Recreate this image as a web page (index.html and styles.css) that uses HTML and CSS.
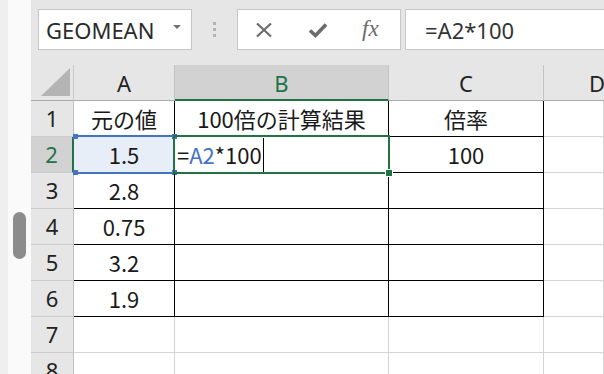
FILE: index.html
```html
<!DOCTYPE html>
<html lang="ja">
<head>
<meta charset="utf-8">
<title>GEOMEAN</title>
<link rel="stylesheet" href="styles.css">
</head>
<body>
<div class="app">
  <div class="side">
    <div class="side-edge"></div>
    <div class="side-track"><div class="thumb"></div></div>
  </div>
  <div class="main">
    <div class="fbar">
      <div class="namebox">
        <span class="name">GEOMEAN</span>
        <svg class="ddarrow" width="8" height="4" viewBox="0 0 8 4"><path d="M0 0H8L4 4Z" fill="#707070"/></svg>
      </div>
      <div class="grip"><i></i><i></i><i></i></div>
      <div class="btns">
        <svg class="ico" width="18" height="16" viewBox="0 0 18 16"><path d="M2 1.5L16 14.5M16 1.5L2 14.5" stroke="#6b6b6b" stroke-width="2.2" fill="none"/></svg>
        <svg class="ico" width="20" height="16" viewBox="0 0 20 16"><path d="M2 8.5L7.5 13.5L18 2.5" stroke="#6b6b6b" stroke-width="3.6" fill="none" stroke-linejoin="miter"/></svg>
        <span class="fx">fx</span>
      </div>
      <div class="finput">=A2*100</div>
    </div>
    <div class="sheet">
      <div class="hd corner"><svg width="30" height="29" viewBox="0 0 30 29"><path d="M29 0V28H0Z" fill="#b4b4b4"/></svg></div>
      <div class="hd col">A</div>
      <div class="hd col sel">B</div>
      <div class="hd col">C</div>
      <div class="hd col last">D</div>

      <div class="hd row">1</div>
      <div class="c t">元の値</div>
      <div class="c t">100倍の計算結果</div>
      <div class="c t">倍率</div>
      <div class="c"></div>

      <div class="hd row sel">2</div>
      <div class="c t ref">1.5<span class="refbox"><i class="h tl"></i><i class="h tr"></i><i class="h bl"></i><i class="h br"></i></span></div>
      <div class="c t edit"><span class="etext">=<span class="blue">A2</span>*100</span><span class="caret"></span><span class="actbox"><i class="fill"></i></span></div>
      <div class="c t">100</div>
      <div class="c"></div>

      <div class="hd row">3</div>
      <div class="c t">2.8</div>
      <div class="c t"></div>
      <div class="c t"></div>
      <div class="c"></div>

      <div class="hd row">4</div>
      <div class="c t">0.75</div>
      <div class="c t"></div>
      <div class="c t"></div>
      <div class="c"></div>

      <div class="hd row">5</div>
      <div class="c t">3.2</div>
      <div class="c t"></div>
      <div class="c t"></div>
      <div class="c"></div>

      <div class="hd row">6</div>
      <div class="c t">1.9</div>
      <div class="c t"></div>
      <div class="c t"></div>
      <div class="c"></div>

      <div class="hd row">7</div>
      <div class="c"></div>
      <div class="c"></div>
      <div class="c"></div>
      <div class="c"></div>

      <div class="hd row">8</div>
      <div class="c"></div>
      <div class="c"></div>
      <div class="c"></div>
      <div class="c"></div>
    </div>
  </div>
</div>
</body>
</html>
```

FILE: styles.css
```css
* { box-sizing: border-box; }
html, body { margin: 0; padding: 0; }
body {
  width: 604px;
  height: 374px;
  overflow: hidden;
  font-family: "Noto Sans CJK JP", "Noto Sans", sans-serif;
  color: #1a1a1a;
  background: #e6e6e6;
}
.app { display: flex; height: 374px; }
.side { display: flex; width: 31px; flex: none; }
.side-edge { width: 8px; background: #efefef; }
.side-track { width: 23px; background: #fafafa; padding: 212px 0 0 5px; }
.thumb { width: 13px; height: 47px; border-radius: 7px; background: #8c8c8c; }

.main { flex: 1; display: flex; flex-direction: column; min-width: 0; overflow: hidden; }

.fbar {
  height: 65px;
  flex: none;
  display: flex;
  align-items: flex-start;
  padding: 9px 0 0 7px;
}
.namebox {
  width: 154px; height: 41px;
  flex: none;
  background: #fff;
  border: 1px solid #c6c6c6;
  display: flex; align-items: center; justify-content: space-between;
  padding: 0 10px 0 7px;
}
.name { font-family: "Noto Sans", sans-serif; font-size: 22px; color: #2b2b2b; }
.ddarrow { margin-top: -5px; }
.grip { width: 45px; flex: none; display: flex; flex-direction: column; align-items: center; gap: 3px; padding-top: 13px; height: 41px; }
.grip i { display: block; width: 3px; height: 3px; background: #b4b4b4; }
.btns {
  width: 164px; height: 41px;
  flex: none;
  background: #fff;
  border: 1px solid #c6c6c6;
  display: flex; align-items: center;
  padding: 0 0 0 17px;
}
.btns .ico:first-child { margin-right: 35px; }
.btns .ico:nth-child(2) { margin-right: 34px; }
.fx {
  font-family: "Liberation Serif", serif;
  font-style: italic;
  font-size: 23px;
  color: #6b6b6b;
  margin-top: -2px;
}
.finput {
  flex: 1;
  margin-left: 4px;
  height: 41px;
  background: #fff;
  border: 1px solid #c6c6c6;
  border-right: none;
  padding: 0 0 0 19px;
  display: flex; align-items: center;
  font-family: "Noto Sans", sans-serif;
  font-size: 22px;
  color: #333;
}

.sheet {
  display: grid;
  grid-template-columns: 43px 101px 214px 155px 1fr;
  grid-template-rows: 36px repeat(8, 36px);
  background: #fff;
  font-size: 22px;
}
.hd {
  background: #e6e6e6;
  display: flex; align-items: center; justify-content: center;
  color: #222;
  font-family: "Noto Sans", sans-serif;
  padding-bottom: 2px;
}
.corner { border-right: 1px solid #c8c8c8; border-bottom: 1px solid #ababab; align-items: flex-end; justify-content: flex-end; padding: 0 2px 3px 0; }
.col { border-right: 1px solid #c4c4c4; border-bottom: 1px solid #ababab; padding-top: 1px; padding-bottom: 0; }
.col.last { border-right: none; justify-content: flex-start; padding-left: 45px; overflow: hidden; }
.col.sel { background: #d2d2d2; color: #217346; border-bottom: 2px solid #217346; }
.row { border-right: 1px solid #c0c0c0; border-bottom: 1px solid #cdcdcd; }
.row.sel { background: #d2d2d2; color: #217346; border-right: 2px solid #217346; }

.c {
  border-right: 1px solid #d4d4d4;
  border-bottom: 1px solid #d4d4d4;
  display: flex; align-items: center; justify-content: center;
  position: relative;
  white-space: nowrap;
  padding-bottom: 2px;
}
.c.t { border-right-color: #000; border-bottom-color: #000; }
.ref { background: #e8eef8; }
.refbox {
  position: absolute;
  left: -1px; right: -2px; top: -2px; bottom: -2px;
  border-top: 2px solid #4472c4;
  border-bottom: 2px solid #4472c4;
}
.refbox .h { position: absolute; width: 5px; height: 5px; background: #4472c4; }
.refbox .tl { left: 0; top: -3px; }
.refbox .tr { right: -1px; top: -3px; }
.refbox .bl { left: 0; bottom: -3px; }
.refbox .br { right: -1px; bottom: -3px; }

.edit { justify-content: flex-start; padding-left: 2px; }
.etext { color: #1a1a1a; }
.blue { color: #4472c4; }
.caret { width: 1px; height: 34px; background: #000; margin-left: 1px; margin-top: 2px; }
.actbox {
  position: absolute;
  left: -2px; right: -2px; top: -2px; bottom: -2px;
  border: 2px solid #217346;
  z-index: 2;
}
.actbox .fill {
  position: absolute;
  right: -4px; bottom: -4px;
  width: 6px; height: 6px;
  background: #217346;
  outline: 1px solid #fff;
}
```
